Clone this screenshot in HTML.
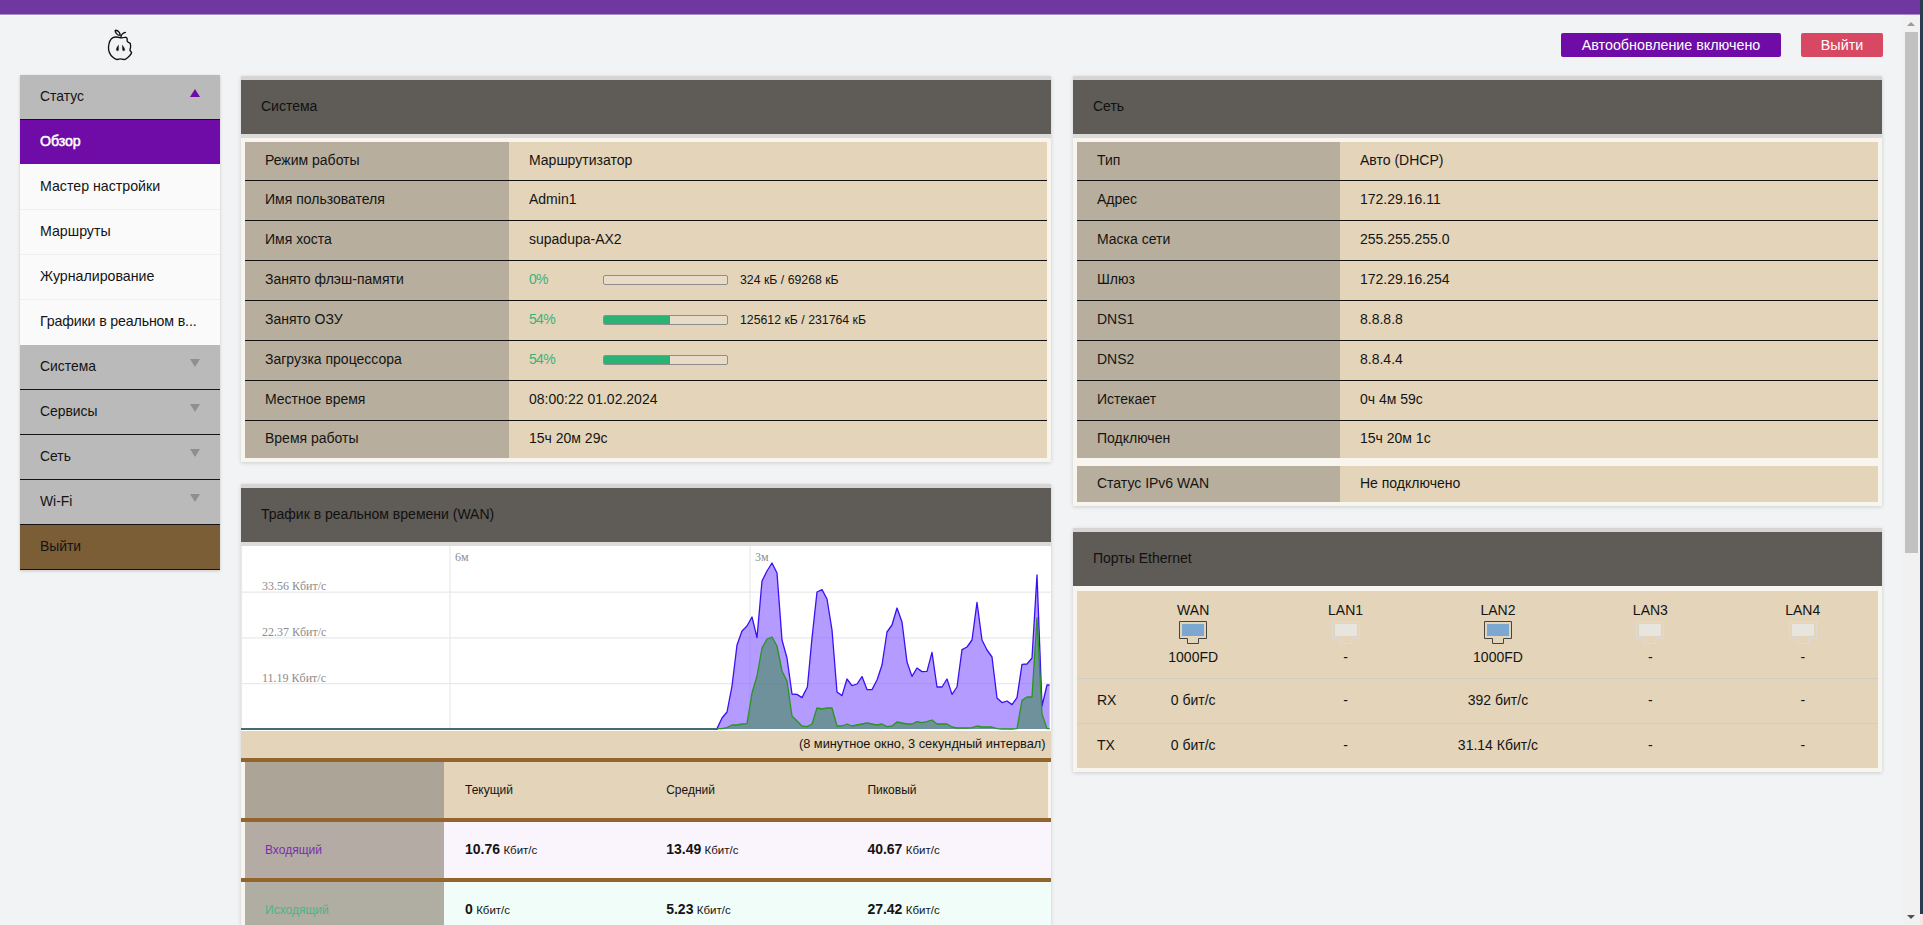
<!DOCTYPE html>
<html lang="ru">
<head>
<meta charset="utf-8">
<title>Обзор</title>
<style>
*{box-sizing:border-box;margin:0;padding:0}
html,body{width:1923px;height:925px;overflow:hidden}
body{position:relative;background:#f2f3f5;font-family:"Liberation Sans",sans-serif;font-size:14px;color:#141414}
.abs{position:absolute}
#topbar{left:0;top:0;width:1920px;height:15px;background:#7037a1;border-bottom:1px solid #a88bc8;box-shadow:0 1px 0 #fafcfa}
#rstrip{left:1920px;top:0;width:3px;height:925px;background:linear-gradient(#2b3a4f 0,#2b3a4f 914px,#f9e3e3 914px)}
#sbtrack{left:1903px;top:15px;width:17px;height:910px;background:#f1f1f1}
#sbthumb{left:1905px;top:32px;width:13px;height:521px;background:#c1c1c1}
.sbarrow{width:0;height:0;border-left:4px solid transparent;border-right:4px solid transparent}
#sbup{left:1907px;top:22px;border-bottom:4px solid #9a9a9a}
#sbdn{left:1907px;top:915px;border-top:4px solid #505050}
.btn{height:24px;line-height:24px;color:#fff;text-align:center;border-radius:2px;font-size:14.3px;white-space:nowrap}
#btn1{left:1561px;top:33px;width:220px;background:#6f0ba6}
#btn2{left:1801px;top:33px;width:82px;background:#d94862}
/* sidebar */
#side{left:20px;top:75px;width:200px;box-shadow:0 1px 3px rgba(0,0,0,.18)}
.mi{height:45px;line-height:44px;padding-left:20px;font-size:14.2px;position:relative;white-space:nowrap;overflow:hidden}
.mi.h{background:#b9bab9;border-bottom:1px solid #141414;line-height:43px;font-size:13.9px}
.mi.a{background:#6f0ba6;color:#fff;height:44px;line-height:42.5px;-webkit-text-stroke:0.5px #fff;letter-spacing:-0.1px}
.mi.s{background:#fafafa;border-bottom:1px solid #efefef;height:45.5px}
.mi.x{background:#7b5e35;border-bottom:1px solid #141414;line-height:43px;font-size:13.9px}
.tri{position:absolute;right:20px;top:14px;width:0;height:0;border-left:5px solid transparent;border-right:5px solid transparent}
.tri.up{border-bottom:8px solid #6f0ba6}
.tri.dn{border-top:8px solid #8f8f8f;top:14px}
/* cards */
.card{background:#f8f5ef;box-shadow:0 1px 4px rgba(0,0,0,.16)}
.ch{height:62px;border-top:4px solid #d6d5d3;border-bottom:4px solid #dcdbda;background:#5f5b56;padding-left:20px;line-height:52px;font-size:14px;color:#111}
.kv{position:absolute;left:4px;right:4px}
.r{display:flex;height:40px;border-bottom:1px solid #111;line-height:37px}
.r:first-child{height:39px;line-height:36px}
.r:last-child{height:37px;line-height:34px}
.r:last-child{border-bottom:none}
.r .k{background:#b8ae9d;padding-left:20px;flex:0 0 auto}
.r .v{background:#e3d4ba;padding-left:20px;flex:1 1 auto;position:relative}
.g{color:#3cb27a;letter-spacing:-0.7px}
.pb{position:absolute;left:94px;top:14px;width:125px;height:10px;border:1px solid #8d8d8d;border-radius:2px;background:#e8dcc6;overflow:hidden}
.pb i{display:block;height:100%;background:#2bb275}
.sm{position:absolute;left:231px;top:1px;font-size:12.3px}

.band{background:#e3d4ba;text-align:right;padding-right:5.5px;line-height:25px;font-size:12.8px}
.br{left:0;width:810px;height:4px;background:#94642d}
.tr{left:4px;width:806px;height:56px;display:flex;line-height:56px;font-size:12px}
.tk{flex:0 0 199px;padding-left:20px}
.tv{flex:0 0 201.2px;padding-left:21px;white-space:nowrap}
.th{background:#e3d4ba}
.in{background:#faf5fc}
.out{background:#f0fdf8}
.tail{flex:1 1 auto}
.tv b{font-size:14px;position:relative;top:-1px}
.tv small{font-size:11.5px;position:relative;top:-1px}
.pt{background:#e3d4ba}
.pr{display:flex}
.pl{border-top:1px solid #d2cdc4;position:relative}
.pl:before{content:"";position:absolute;left:-4px;right:-4px;top:-1px;height:1px;background:#dcd8d0;z-index:-1}
.p0{flex:0 0 40px;padding-left:20px}
.pc{flex:0 0 152.4px;text-align:center;white-space:nowrap}
.pn{margin-top:11px;height:17px;line-height:17px}
.pi{display:block;margin:1px auto 0}
.ps{height:17px;line-height:17px;margin-top:4px}
</style>
</head>
<body>
<div id="topbar" class="abs"></div>
<div id="sbtrack" class="abs"></div>
<div id="sbthumb" class="abs"></div>
<div id="sbup" class="abs sbarrow"></div>
<div id="sbdn" class="abs sbarrow"></div>
<div id="rstrip" class="abs"></div>

<svg class="abs" style="left:100px;top:25px" width="40" height="40" viewBox="100 25 40 40" fill="none" stroke="#111" stroke-width="1.35" stroke-linecap="round" stroke-linejoin="round">
<path d="M120.8 37.9C118 37 115 36.6 112.9 37.6C110.2 39 108.9 43 108.5 47C108.3 51 110.2 55 112.9 57.3C114.6 58.9 116 59.7 117.5 59.5C118.7 59.3 119.6 58.8 120.5 58.8C121.6 58.8 122.6 59.6 124.1 59.5C126 59.3 127.9 57.4 129.4 55.9C130.6 54.7 131.6 53.6 131.6 52.6C131.5 51.5 130.1 51.4 130 50.2C129.9 49 130.7 48 130.6 46.6C130.5 45 130.8 43.7 129.9 43.1C129 42.5 128 42.4 127.4 41.6C126.8 40.8 127.4 39.4 127.1 38.4C126.8 37.4 125.6 37.2 124.6 37.3C123.3 37.4 122 37.9 120.8 37.9Z"/>
<path d="M120.8 37.6C121 36 121.6 34.6 122.6 33.8C123.5 33 124.5 32.6 125.4 32.4"/>
<path d="M115.2 30.3C116.6 30.2 118.2 30.9 119.2 32.3C119.9 33.3 120.3 34.6 120.2 35.4C118.8 35.4 117.4 34.8 116.4 33.6C115.6 32.6 115.1 31.3 115.2 30.3Z"/>
<path d="M118.4 45.3C117.4 46.6 116.3 48.4 116.3 49.5C116.3 50.3 116.8 50.8 117.5 50.8C118.2 50.8 118.6 50.3 118.6 49.5C118.7 48.2 118.5 46.6 118.4 45.3Z" fill="#111" stroke-width="0.3"/>
<path d="M122.4 45.3C123.4 46.6 124.7 48.4 124.8 49.5C124.8 50.3 124.3 50.8 123.6 50.8C122.9 50.8 122.5 50.3 122.5 49.5C122.3 48.2 122.3 46.6 122.4 45.3Z" fill="#111" stroke-width="0.3"/>
</svg>

<div id="btn1" class="abs btn">Автообновление включено</div>
<div id="btn2" class="abs btn">Выйти</div>

<div id="side" class="abs">
<div class="mi h">Статус<span class="tri up"></span></div>
<div class="mi a">Обзор</div>
<div class="mi s">Мастер настройки</div>
<div class="mi s" style="line-height:43px">Маршруты</div>
<div class="mi s" style="height:45px;line-height:42px">Журналирование</div>
<div class="mi s" style="letter-spacing:-0.15px;height:45px;border-bottom:none;line-height:43px">Графики в реальном в...</div>
<div class="mi h">Система<span class="tri dn"></span></div>
<div class="mi h">Сервисы<span class="tri dn"></span></div>
<div class="mi h">Сеть<span class="tri dn"></span></div>
<div class="mi h">Wi-Fi<span class="tri dn"></span></div>
<div class="mi x">Выйти</div>
</div>

<!-- CARD: system -->
<div class="abs card" id="c1" style="left:241px;top:76px;width:810px;height:386px">
<div class="ch">Система</div>
<div class="kv" style="top:66px">
<div class="r"><div class="k" style="width:264px">Режим работы</div><div class="v">Маршрутизатор</div></div>
<div class="r"><div class="k" style="width:264px">Имя пользователя</div><div class="v">Admin1</div></div>
<div class="r"><div class="k" style="width:264px">Имя хоста</div><div class="v">supadupa-AX2</div></div>
<div class="r"><div class="k" style="width:264px">Занято флэш-памяти</div><div class="v"><span class="g">0%</span><span class="pb"><i style="width:0"></i></span><span class="sm">324 кБ / 69268 кБ</span></div></div>
<div class="r"><div class="k" style="width:264px">Занято ОЗУ</div><div class="v"><span class="g">54%</span><span class="pb"><i style="width:54%"></i></span><span class="sm">125612 кБ / 231764 кБ</span></div></div>
<div class="r"><div class="k" style="width:264px">Загрузка процессора</div><div class="v"><span class="g">54%</span><span class="pb"><i style="width:54%"></i></span></div></div>
<div class="r"><div class="k" style="width:264px">Местное время</div><div class="v">08:00:22 01.02.2024</div></div>
<div class="r"><div class="k" style="width:264px">Время работы</div><div class="v">15ч 20м 29с</div></div>
</div>
</div>

<!-- CARD: network -->
<div class="abs card" id="c2" style="left:1073px;top:76px;width:809px;height:430px">
<div class="ch">Сеть</div>
<div class="kv" style="top:66px">
<div class="r"><div class="k" style="width:263px">Тип</div><div class="v">Авто (DHCP)</div></div>
<div class="r"><div class="k" style="width:263px">Адрес</div><div class="v">172.29.16.11</div></div>
<div class="r"><div class="k" style="width:263px">Маска сети</div><div class="v">255.255.255.0</div></div>
<div class="r"><div class="k" style="width:263px">Шлюз</div><div class="v">172.29.16.254</div></div>
<div class="r"><div class="k" style="width:263px">DNS1</div><div class="v">8.8.8.8</div></div>
<div class="r"><div class="k" style="width:263px">DNS2</div><div class="v">8.8.4.4</div></div>
<div class="r"><div class="k" style="width:263px">Истекает</div><div class="v">0ч 4м 59с</div></div>
<div class="r"><div class="k" style="width:263px">Подключен</div><div class="v">15ч 20м 1с</div></div>
</div>
<div class="kv" style="top:390.25px">
<div class="r" style="height:35.5px;line-height:35px"><div class="k" style="width:263px">Статус IPv6 WAN</div><div class="v">Не подключено</div></div>
</div>
</div>

<!-- CARD: traffic -->
<div class="abs card" id="c3" style="left:241px;top:484px;width:810px;height:441px">
<div class="ch">Трафик в реальном времени (WAN)</div>
<svg class="abs" style="left:0;top:62px" width="810" height="185" viewBox="241 546 810 185">
<rect x="241" y="546" width="810" height="185" fill="#fff"/>
<g stroke="#e9e9e9" stroke-width="1.2">
<line x1="241" x2="1051" y1="592.2" y2="592.2"/>
<line x1="241" x2="1051" y1="637.8" y2="637.8"/>
<line x1="241" x2="1051" y1="683.6" y2="683.6"/>
<line x1="450" x2="450" y1="546" y2="729"/>
<line x1="750" x2="750" y1="546" y2="729"/>
<line x1="241.5" x2="241.5" y1="546" y2="729"/>
</g>
<g font-family="'Liberation Serif',serif" font-size="12" fill="#8c8c8c">
<text x="262" y="590">33.56 Кбит/с</text>
<text x="262" y="636">22.37 Кбит/с</text>
<text x="262" y="682">11.19 Кбит/с</text>
<text x="455" y="561">6м</text>
<text x="755" y="561">3м</text>
</g>
<rect x="241" y="728" width="477" height="2" fill="#456c6c"/>
<path d="M717.0 729L717.0 728.6L722.0 718.0L727.0 712.0L732.0 686.0L737.0 645.0L742.0 631.0L747.0 626.0L752.0 617.0L757.0 637.6L762.0 581.0L767.0 571.0L772.0 563.0L777.0 573.0L782.0 640.0L787.0 658.0L792.0 694.0L797.0 694.4L802.0 697.6L807.4 687.0L812.0 638.0L817.0 592.0L822.0 589.6L827.0 599.0L832.0 630.0L837.0 692.0L842.0 695.6L847.0 679.0L852.0 685.6L857.0 684.0L862.0 676.6L867.0 689.6L872.0 689.6L877.0 680.0L882.0 665.0L882.0 665.0L887.0 632.0L892.0 625.0L897.0 608.0L902.0 622.0L907.0 662.0L912.0 676.4L917.0 668.0L922.0 671.6L927.0 671.4L932.0 652.4L937.0 687.0L942.0 687.0L947.0 679.0L952.0 694.4L957.0 687.0L962.0 649.6L967.0 647.0L972.0 640.0L977.0 602.4L982.0 640.0L987.0 650.0L992.0 657.0L997.0 698.0L1002.0 702.6L1007.0 701.0L1012.0 704.6L1017.0 697.6L1022.0 664.4L1027.0 664.0L1032.0 658.0L1037.0 575.0L1042.0 706.0L1047.0 685.0L1049.6 685.0L1049.6 729Z" fill="#8059ff" fill-opacity="0.6" stroke="none"/>
<path d="M717.0 728.6L722.0 718.0L727.0 712.0L732.0 686.0L737.0 645.0L742.0 631.0L747.0 626.0L752.0 617.0L757.0 637.6L762.0 581.0L767.0 571.0L772.0 563.0L777.0 573.0L782.0 640.0L787.0 658.0L792.0 694.0L797.0 694.4L802.0 697.6L807.4 687.0L812.0 638.0L817.0 592.0L822.0 589.6L827.0 599.0L832.0 630.0L837.0 692.0L842.0 695.6L847.0 679.0L852.0 685.6L857.0 684.0L862.0 676.6L867.0 689.6L872.0 689.6L877.0 680.0L882.0 665.0L882.0 665.0L887.0 632.0L892.0 625.0L897.0 608.0L902.0 622.0L907.0 662.0L912.0 676.4L917.0 668.0L922.0 671.6L927.0 671.4L932.0 652.4L937.0 687.0L942.0 687.0L947.0 679.0L952.0 694.4L957.0 687.0L962.0 649.6L967.0 647.0L972.0 640.0L977.0 602.4L982.0 640.0L987.0 650.0L992.0 657.0L997.0 698.0L1002.0 702.6L1007.0 701.0L1012.0 704.6L1017.0 697.6L1022.0 664.4L1027.0 664.0L1032.0 658.0L1037.0 575.0L1042.0 706.0L1047.0 685.0L1049.6 685.0" fill="none" stroke="#3a10f5" stroke-width="1.3" stroke-linejoin="round"/>
<path d="M717.0 729L717.0 728.6L722.0 728.6L727.0 727.6L732.0 725.0L737.0 725.0L742.0 724.0L747.0 723.6L752.0 693.0L757.0 676.0L762.0 648.0L767.0 639.0L772.0 637.0L777.0 646.0L782.0 671.0L787.0 681.0L792.0 716.0L797.0 721.0L802.0 726.0L807.0 726.6L812.0 724.0L817.0 708.0L822.0 709.0L827.0 708.0L832.0 708.0L837.0 726.0L842.0 726.0L847.0 724.0L852.0 726.0L857.0 725.0L862.0 724.0L867.0 723.0L872.0 724.0L877.0 725.0L882.0 724.0L882.0 724.0L887.0 726.6L892.0 726.0L897.0 722.0L902.0 723.0L907.0 724.0L912.0 724.0L917.0 721.6L922.0 722.6L927.0 721.6L932.0 720.0L937.0 724.0L942.0 724.0L947.0 724.0L952.0 727.0L957.0 728.0L962.0 728.0L967.0 728.0L972.0 727.6L977.0 726.0L982.0 727.0L987.0 727.0L992.0 727.0L997.0 728.6L1002.0 729.0L1007.0 729.0L1012.0 729.0L1017.0 728.6L1022.0 700.4L1027.0 697.0L1032.0 697.0L1037.0 617.6L1042.0 714.0L1047.0 728.6L1049.6 728.6L1049.6 729Z" fill="#3f8a5a" fill-opacity="0.6" stroke="none"/>
<path d="M717.0 728.6L722.0 728.6L727.0 727.6L732.0 725.0L737.0 725.0L742.0 724.0L747.0 723.6L752.0 693.0L757.0 676.0L762.0 648.0L767.0 639.0L772.0 637.0L777.0 646.0L782.0 671.0L787.0 681.0L792.0 716.0L797.0 721.0L802.0 726.0L807.0 726.6L812.0 724.0L817.0 708.0L822.0 709.0L827.0 708.0L832.0 708.0L837.0 726.0L842.0 726.0L847.0 724.0L852.0 726.0L857.0 725.0L862.0 724.0L867.0 723.0L872.0 724.0L877.0 725.0L882.0 724.0L882.0 724.0L887.0 726.6L892.0 726.0L897.0 722.0L902.0 723.0L907.0 724.0L912.0 724.0L917.0 721.6L922.0 722.6L927.0 721.6L932.0 720.0L937.0 724.0L942.0 724.0L947.0 724.0L952.0 727.0L957.0 728.0L962.0 728.0L967.0 728.0L972.0 727.6L977.0 726.0L982.0 727.0L987.0 727.0L992.0 727.0L997.0 728.6L1002.0 729.0L1007.0 729.0L1012.0 729.0L1017.0 728.6L1022.0 700.4L1027.0 697.0L1032.0 697.0L1037.0 617.6L1042.0 714.0L1047.0 728.6L1049.6 728.6" fill="none" stroke="#2a951f" stroke-width="1.3" stroke-linejoin="round"/>
</svg>
<div class="abs band" style="left:0;top:247px;width:810px;height:27px">(8 минутное окно, 3 секундный интервал)</div>
<div class="abs br" style="top:274px"></div>
<div class="abs tr" style="top:278px"><div class="tk" style="background:#aca597"></div><div class="tv th">Текущий</div><div class="tv th">Средний</div><div class="tv th">Пиковый</div></div>
<div class="abs br" style="top:334px"></div>
<div class="abs tr" style="top:338px"><div class="tk" style="background:#b3aba4;color:#7a2bb0">Входящий</div><div class="tv in"><b>10.76</b> <small>Кбит/с</small></div><div class="tv in"><b>13.49</b> <small>Кбит/с</small></div><div class="tv in"><b>40.67</b> <small>Кбит/с</small></div><div class="tail in"></div></div>
<div class="abs br" style="top:394px"></div>
<div class="abs tr" style="top:398px"><div class="tk" style="background:#b0ada3;color:#4bb583">Исходящий</div><div class="tv out"><b>0</b> <small>Кбит/с</small></div><div class="tv out"><b>5.23</b> <small>Кбит/с</small></div><div class="tv out"><b>27.42</b> <small>Кбит/с</small></div><div class="tail out"></div></div>
</div>

<!-- CARD: ports -->
<div class="abs card" id="c4" style="left:1073px;top:528px;width:809px;height:244px">
<div class="ch" style="border-bottom:none;height:58px">Порты Ethernet</div>
<div class="abs pt" style="left:4px;top:63.25px;width:801px;height:177px">
<div class="pr" style="height:87px"><div class="p0"></div><div class="pc"><div class="pn">WAN</div><svg class="pi" width="30" height="25" viewBox="0 0 30 25"><path d="M1.5 1.5H28.5V18.5H20.5V23.5H9.5V18.5H1.5Z" fill="none" stroke="#444" stroke-width="1"/><rect x="4" y="4" width="22" height="12" fill="#7ba7d1"/></svg><div class="ps">1000FD</div></div><div class="pc"><div class="pn">LAN1</div><svg class="pi" width="30" height="25" viewBox="0 0 30 25"><path d="M1.5 1.5H28.5V18.5H20.5V23.5H9.5V18.5H1.5Z" fill="none" stroke="#dedbd6" stroke-width="1"/><rect x="4" y="4" width="22" height="12" fill="#e8e4de"/></svg><div class="ps">-</div></div><div class="pc"><div class="pn">LAN2</div><svg class="pi" width="30" height="25" viewBox="0 0 30 25"><path d="M1.5 1.5H28.5V18.5H20.5V23.5H9.5V18.5H1.5Z" fill="none" stroke="#444" stroke-width="1"/><rect x="4" y="4" width="22" height="12" fill="#7ba7d1"/></svg><div class="ps">1000FD</div></div><div class="pc"><div class="pn">LAN3</div><svg class="pi" width="30" height="25" viewBox="0 0 30 25"><path d="M1.5 1.5H28.5V18.5H20.5V23.5H9.5V18.5H1.5Z" fill="none" stroke="#dedbd6" stroke-width="1"/><rect x="4" y="4" width="22" height="12" fill="#e8e4de"/></svg><div class="ps">-</div></div><div class="pc"><div class="pn">LAN4</div><svg class="pi" width="30" height="25" viewBox="0 0 30 25"><path d="M1.5 1.5H28.5V18.5H20.5V23.5H9.5V18.5H1.5Z" fill="none" stroke="#dedbd6" stroke-width="1"/><rect x="4" y="4" width="22" height="12" fill="#e8e4de"/></svg><div class="ps">-</div></div></div>
<div class="pr pl" style="height:45px;line-height:43px"><div class="p0">RX</div><div class="pc">0 бит/с</div><div class="pc">-</div><div class="pc">392 бит/с</div><div class="pc">-</div><div class="pc">-</div></div>
<div class="pr pl" style="height:45px;line-height:43px"><div class="p0">TX</div><div class="pc">0 бит/с</div><div class="pc">-</div><div class="pc">31.14 Кбит/с</div><div class="pc">-</div><div class="pc">-</div></div>
</div>
</div>

</body>
</html>
